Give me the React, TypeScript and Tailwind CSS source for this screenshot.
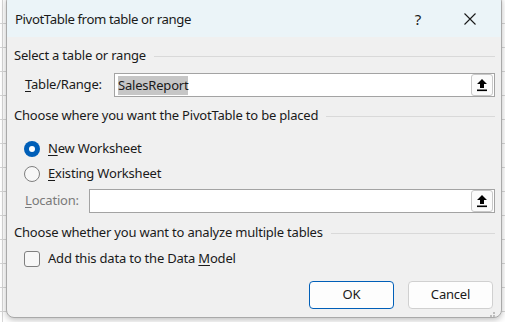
import React from "react";

const font = { fontFamily: '"Noto Sans", "Segoe UI", sans-serif' };

function UploadBtn() {
  return (
    <div className="flex h-[22px] w-[22px] items-center justify-center rounded-[3px] border border-[#c8c8c8] bg-[#fbfbfb]">
      <svg width="12" height="14" viewBox="0 0 12 14">
        <path d="M6 1 L11 6 L8 6 L8 10 L4 10 L4 6 L1 6 Z" fill="#000" />
        <rect x="1" y="11.5" width="10" height="1.6" fill="#000" />
      </svg>
    </div>
  );
}

function Section({ title }: { title: string }) {
  return (
    <div className="flex h-[20px] items-center">
      <span className="whitespace-nowrap">{title}</span>
      <div className="ml-[8px] h-px flex-1 bg-[#d9d9d9]" />
    </div>
  );
}

export default function App() {
  return (
    <div
      className="relative h-[322px] w-[505px] overflow-hidden bg-white bg-[repeating-linear-gradient(to_bottom,transparent_0,transparent_23px,#d6d6d6_23px,#d6d6d6_24px)]"
      style={font}
    >
      <div className="flex h-[322px] w-full">
        <div className="ml-[2px] h-full w-px bg-[#d6d6d6]" />
        <div className="ml-[3px] mt-[-6px] flex h-[324px] w-[496px] flex-col overflow-hidden rounded-[8px] border border-[#a9a9a9] bg-[#f0f0f0] shadow-[0_2px_6px_rgba(0,0,0,0.25)]">
          {/* title bar */}
          <div className="flex h-[42px] shrink-0 items-end bg-[#ebf4f8] pb-[8px] pl-[8px]">
            <span className="text-[13.2px] leading-[20px] tracking-[-0.4px] text-[#1a1a1a]">PivotTable from table or range</span>
            <div className="ml-auto flex items-center">
              <span className="w-[14px] text-center text-[15px] leading-[20px] text-[#1a1a1a]">?</span>
              <svg className="ml-[39px] mr-[25px]" width="12" height="12" viewBox="0 0 12 12">
                <path d="M0.5 0.5 L11.5 11.5 M11.5 0.5 L0.5 11.5" stroke="#1a1a1a" strokeWidth="1.1" />
              </svg>
            </div>
          </div>
          {/* body */}
          <div className="flex flex-1 flex-col pl-[7px] pr-[6px] pt-[9px] text-[13px] tracking-[-0.2px] text-[#1a1a1a]">
            <Section title="Select a table or range" />
            <div className="mt-[7px] flex h-[24px] items-center">
              <span className="w-[100px] whitespace-nowrap pl-[11px]">
                <span className="underline underline-offset-2">T</span>able/Range:
              </span>
              <div className="flex h-[24px] flex-1 items-center border border-[#a3a3a3] bg-white pl-[3px] pr-px">
                <span className="bg-[#c6c6c6] leading-[19px]">SalesReport</span>
                <div className="ml-auto">
                  <UploadBtn />
                </div>
              </div>
            </div>
            <div className="mt-[9px]">
              <Section title="Choose where you want the PivotTable to be placed" />
            </div>
            <div className="mt-[13px] flex h-[20px] items-center pl-[10px]">
              <div className="flex h-[16px] w-[16px] items-center justify-center rounded-full bg-[#005fb8]">
                <div className="h-[6px] w-[6px] rounded-full bg-white" />
              </div>
              <span className="ml-[8px]">
                <span className="underline underline-offset-2">N</span>ew Worksheet
              </span>
            </div>
            <div className="mt-[5px] flex h-[20px] items-center pl-[10px]">
              <div className="h-[16px] w-[16px] rounded-full border border-[#7f7f7f] bg-[#f7f7f7]" />
              <span className="ml-[8px]">
                <span className="underline underline-offset-2">E</span>xisting Worksheet
              </span>
            </div>
            <div className="mt-[5px] flex h-[24px] items-center">
              <span className="w-[75px] whitespace-nowrap pl-[11px] text-[#7a7a7a]">
                <span className="underline underline-offset-2">L</span>ocation:
              </span>
              <div className="flex h-[24px] flex-1 items-center border border-[#a3a3a3] bg-white pr-px">
                <div className="ml-auto">
                  <UploadBtn />
                </div>
              </div>
            </div>
            <div className="mt-[10px]">
              <Section title="Choose whether you want to analyze multiple tables" />
            </div>
            <div className="mt-[6px] flex h-[20px] items-center pl-[10px]">
              <div className="h-[16px] w-[16px] rounded-[3px] border border-[#7f7f7f] bg-[#f7f7f7]" />
              <span className="ml-[8px]">
                Add this data to the Data <span className="underline underline-offset-2">M</span>odel
              </span>
            </div>
            <div className="mt-[12px] flex justify-end gap-[14px] pr-[2px]">
              <button className="flex h-[28px] w-[85px] items-center justify-center rounded-[4px] border border-[#005fb8] bg-[#fdfdfd] text-[13px] text-[#1a1a1a]">
                OK
              </button>
              <button className="flex h-[28px] w-[85px] items-center justify-center rounded-[4px] border border-[#d0d0d0] bg-[#fdfdfd] text-[13px] text-[#1a1a1a]">
                Cancel
              </button>
            </div>
            <div className="flex justify-end pt-[3px]">
              <svg width="8" height="8" viewBox="0 0 8 8">
                <rect x="6" y="0" width="2" height="2" fill="#bdbdbd" />
                <rect x="3" y="3" width="2" height="2" fill="#bdbdbd" />
                <rect x="6" y="3" width="2" height="2" fill="#bdbdbd" />
                <rect x="0" y="6" width="2" height="2" fill="#bdbdbd" />
                <rect x="3" y="6" width="2" height="2" fill="#bdbdbd" />
                <rect x="6" y="6" width="2" height="2" fill="#bdbdbd" />
              </svg>
            </div>
          </div>
        </div>
      </div>
    </div>
  );
}
